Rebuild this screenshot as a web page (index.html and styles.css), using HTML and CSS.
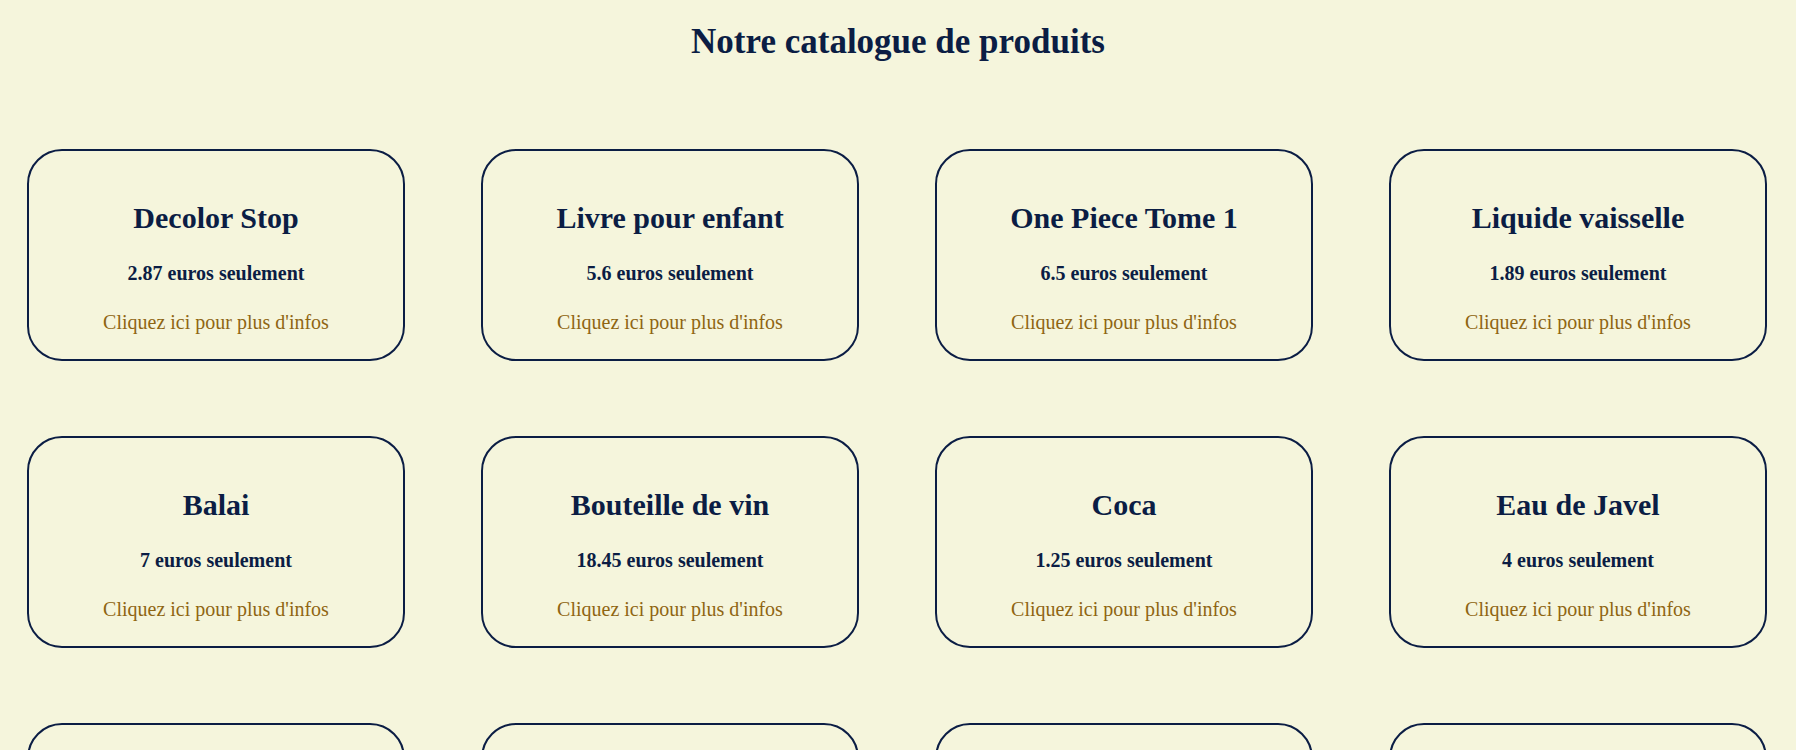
FILE: index.html
```html
<!DOCTYPE html>
<html lang="fr">
<head>
<meta charset="utf-8">
<title>Notre catalogue de produits</title>
<link rel="stylesheet" href="styles.css">
</head>
<body>
<h1 class="page-title">Notre catalogue de produits</h1>
<main class="catalog">
  <article class="card"><h2 class="card-title">Decolor Stop</h2><h4 class="price">2.87 euros seulement</h4><a class="more" href="#">Cliquez ici pour plus d'infos</a></article>
  <article class="card"><h2 class="card-title">Livre pour enfant</h2><h4 class="price">5.6 euros seulement</h4><a class="more" href="#">Cliquez ici pour plus d'infos</a></article>
  <article class="card"><h2 class="card-title">One Piece Tome 1</h2><h4 class="price">6.5 euros seulement</h4><a class="more" href="#">Cliquez ici pour plus d'infos</a></article>
  <article class="card"><h2 class="card-title">Liquide vaisselle</h2><h4 class="price">1.89 euros seulement</h4><a class="more" href="#">Cliquez ici pour plus d'infos</a></article>
  <article class="card"><h2 class="card-title">Balai</h2><h4 class="price">7 euros seulement</h4><a class="more" href="#">Cliquez ici pour plus d'infos</a></article>
  <article class="card"><h2 class="card-title">Bouteille de vin</h2><h4 class="price">18.45 euros seulement</h4><a class="more" href="#">Cliquez ici pour plus d'infos</a></article>
  <article class="card"><h2 class="card-title">Coca</h2><h4 class="price">1.25 euros seulement</h4><a class="more" href="#">Cliquez ici pour plus d'infos</a></article>
  <article class="card"><h2 class="card-title">Eau de Javel</h2><h4 class="price">4 euros seulement</h4><a class="more" href="#">Cliquez ici pour plus d'infos</a></article>
  <article class="card"><h2 class="card-title">Chips</h2><h4 class="price">2 euros seulement</h4><a class="more" href="#">Cliquez ici pour plus d'infos</a></article>
  <article class="card"><h2 class="card-title">Savon</h2><h4 class="price">3 euros seulement</h4><a class="more" href="#">Cliquez ici pour plus d'infos</a></article>
  <article class="card"><h2 class="card-title">Dentifrice</h2><h4 class="price">2.5 euros seulement</h4><a class="more" href="#">Cliquez ici pour plus d'infos</a></article>
  <article class="card"><h2 class="card-title">Shampoing</h2><h4 class="price">4.2 euros seulement</h4><a class="more" href="#">Cliquez ici pour plus d'infos</a></article>
</main>
</body>
</html>
```
FILE: styles.css
```css
html, body {
  background: #f5f5dc;
}
body {
  margin: 0;
  font-family: "Liberation Serif", "Times New Roman", serif;
  color: #0b1d44;
}
.page-title {
  margin: 22px 0 87px;
  font-size: 35px;
  line-height: 40px;
  font-weight: bold;
  text-align: center;
}
.catalog {
  display: grid;
  grid-template-columns: repeat(4, 1fr);
  column-gap: 76px;
  row-gap: 75px;
  padding: 0 29px 40px 27px;
}
.card {
  display: flex;
  flex-direction: column;
  align-items: center;
  gap: 26.5px;
  padding: 24px 16px 25px;
  border: 2px solid #0b1d44;
  border-radius: 35px;
  text-align: center;
}
.card-title {
  margin: 26px 0 0;
  font-size: 30px;
  line-height: 34px;
  font-weight: bold;
}
.price {
  margin: 0;
  font-size: 20px;
  line-height: 23px;
  font-weight: bold;
}
.more {
  font-size: 20px;
  line-height: 23px;
  color: #8f6512;
  text-decoration: none;
}
```
